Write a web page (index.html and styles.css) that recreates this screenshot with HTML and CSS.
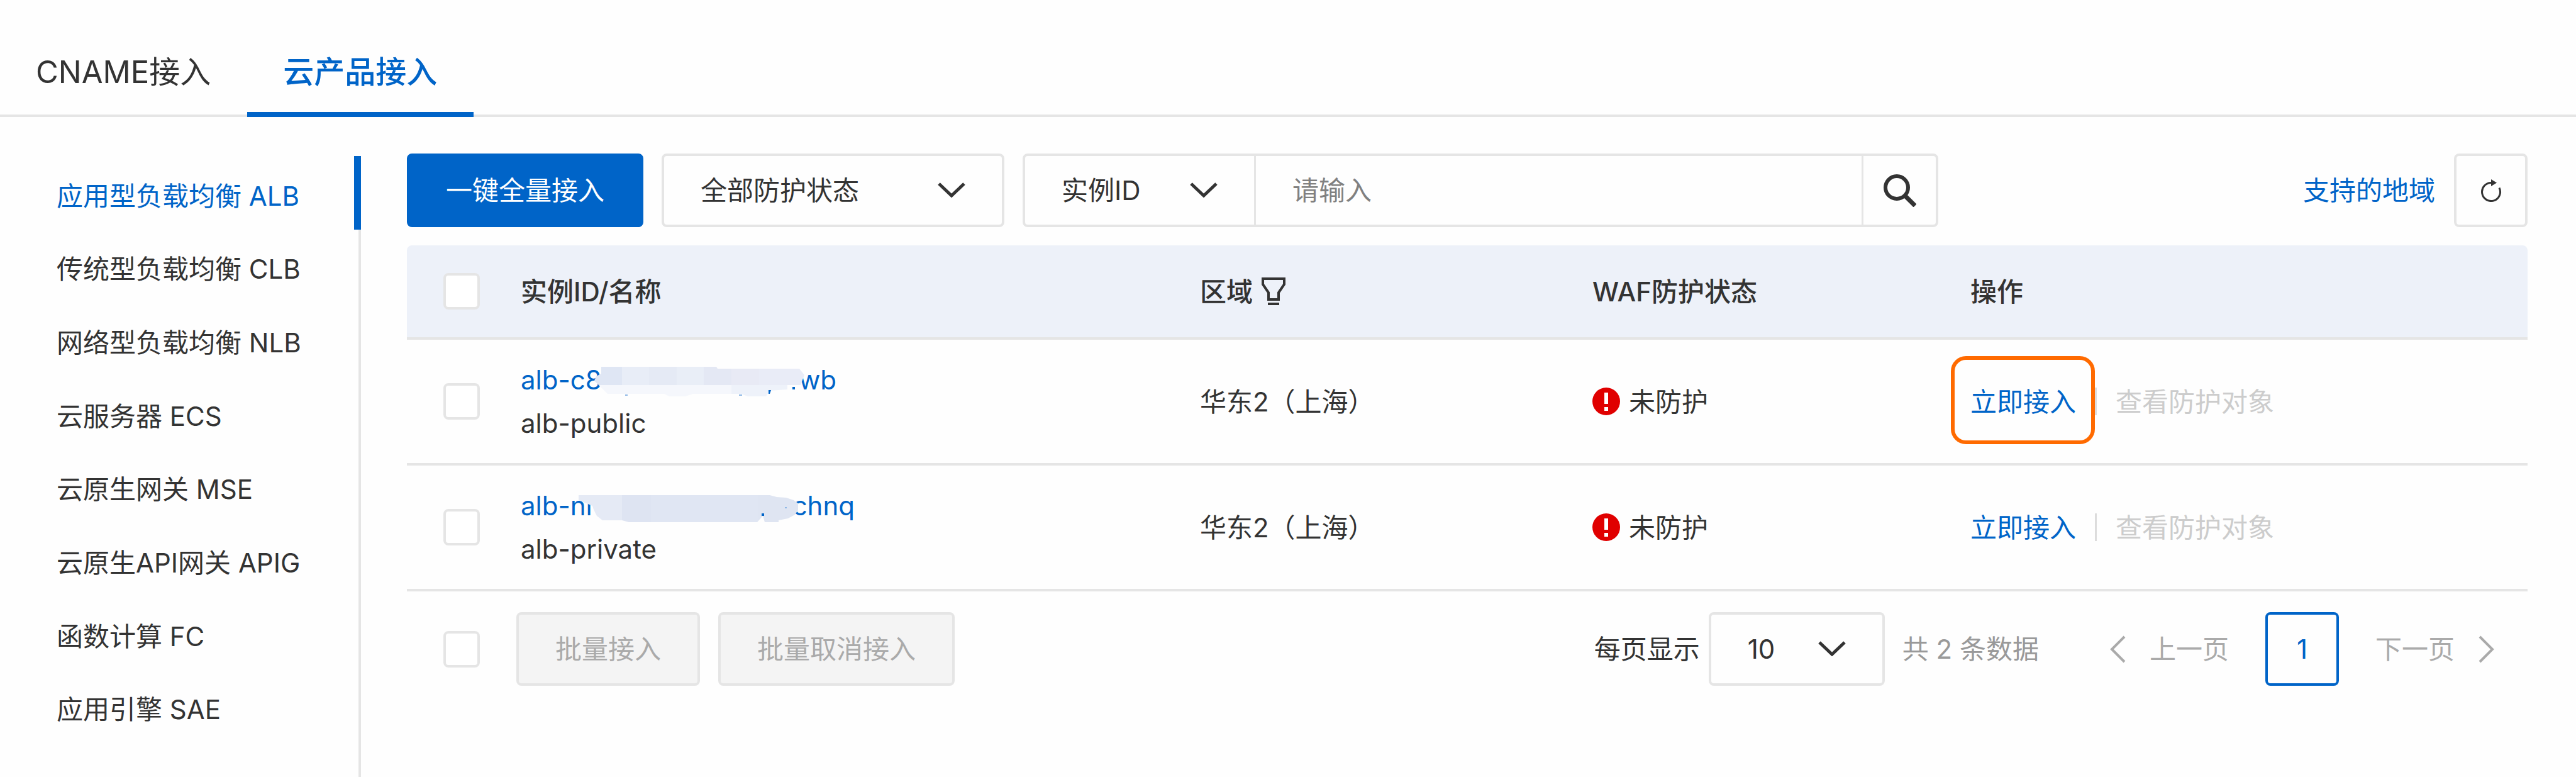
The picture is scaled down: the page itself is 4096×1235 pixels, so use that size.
FILE: index.html
```html
<!DOCTYPE html>
<html lang="zh-CN">
<head>
<meta charset="utf-8">
<title>云产品接入</title>
<link rel="stylesheet" href="styles.css">
</head>
<body>
<svg class="defs" aria-hidden="true">
  <symbol id="chevron" viewBox="0 0 44 24"><path d="M2 2 22 21 42 2" fill="none" stroke="currentColor" stroke-width="5"/></symbol>
  <symbol id="warn" viewBox="0 0 44 44"><circle cx="22" cy="22" r="22" fill="#e00000"/><path d="M19 8h6v18h-6zM19 31h6v6h-6z" fill="#fff"/></symbol>
</svg>
<nav class="tabs">
  <a class="tab" href="#cname">CNAME接入</a>
  <a class="tab tab-active" href="#cloud" aria-current="page">云产品接入</a>
</nav>
<div class="layout">
  <nav class="side">
    <ul class="side-list">
      <li><a class="side-link side-active" href="#alb">应用型负载均衡 ALB</a></li>
      <li><a class="side-link" href="#clb">传统型负载均衡 CLB</a></li>
      <li><a class="side-link" href="#nlb">网络型负载均衡 NLB</a></li>
      <li><a class="side-link" href="#ecs">云服务器 ECS</a></li>
      <li><a class="side-link" href="#mse">云原生网关 MSE</a></li>
      <li><a class="side-link" href="#apig">云原生API网关 APIG</a></li>
      <li><a class="side-link" href="#fc">函数计算 FC</a></li>
      <li><a class="side-link" href="#sae">应用引擎 SAE</a></li>
    </ul>
  </nav>
  <main class="main">
    <div class="toolbar">
      <button class="btn btn-primary" type="button">一键全量接入</button>
      <div class="select select-status">
        <select aria-label="防护状态"><option>全部防护状态</option></select>
        <svg class="chevron"><use href="#chevron"/></svg>
      </div>
      <form class="search">
        <div class="select select-field">
          <select aria-label="搜索字段"><option>实例ID</option></select>
          <svg class="chevron"><use href="#chevron"/></svg>
        </div>
        <input class="search-input" type="text" placeholder="请输入" aria-label="搜索">
        <button class="search-btn" type="button" aria-label="搜索">
          <svg width="52" height="52" viewBox="0 0 52 52"><circle cx="21" cy="21" r="18" fill="none" stroke="#333" stroke-width="6"/><path d="M34 34 50 50" stroke="#333" stroke-width="7"/></svg>
        </button>
      </form>
      <div class="tools">
        <a class="link" href="#regions">支持的地域</a>
        <button class="btn btn-icon" type="button" aria-label="刷新">
          <svg width="34" height="36" viewBox="0 0 34 36"><path d="M17 5.500A14.500 14.500 0 1 0 30 13.500" fill="none" stroke="#333" stroke-width="3"/><path d="M17 0 26 5.500 17 11z" fill="#333"/></svg>
        </button>
      </div>
    </div>

    <table class="table">
      <colgroup><col class="col-check"><col><col class="col-region"><col class="col-status"><col class="col-action"></colgroup>
      <thead>
        <tr>
          <th class="check-cell"><input class="check" type="checkbox" aria-label="全选"></th>
          <th>实例ID/名称</th>
          <th><div class="with-icon">区域<svg width="38" height="44" viewBox="0 0 38 44"><path d="M2 2H36V11L27 24V35H11V24L2 11z" fill="none" stroke="#333" stroke-width="4"/><path d="M10 42H28" stroke="#333" stroke-width="4"/></svg></div></th>
          <th>WAF防护状态</th>
          <th>操作</th>
        </tr>
      </thead>
      <tbody>
        <tr>
          <td class="check-cell"><input class="check" type="checkbox" aria-label="alb-public"></td>
          <td>
            <a class="link id id-public" href="#alb-public"><span>alb-c8</span><span>wb</span>
              <svg class="mask mask-public" width="340" height="52" viewBox="0 0 340 52">
                <clipPath id="brush-a"><path d="M12 3H195L197 6H327L335 16 329 32H308V39L280 41 274 50H245L234 46H158L146 50H120L112 46H22L12 36 1 25 4 18 12 14z"/></clipPath>
                <g clip-path="url(#brush-a)">
                  <path fill="#dfe6f4" d="M0 0h45v32H0z"/><path fill="#e8edf7" d="M45 0h43v32H45z"/><path fill="#e5eaf5" d="M88 0h44v32H88z"/><path fill="#e9eef7" d="M132 0h43v32h-43z"/><path fill="#e4e8f4" d="M175 0h44v32h-44z"/><path fill="#e8eaf5" d="M219 0h44v32h-44z"/><path fill="#e9ecf7" d="M263 0h77v32h-77z"/>
                  <path fill="#f5f7fc" d="M0 32h219v20H0z"/><path fill="#eef2fa" d="M219 32h121v20H219z"/>
                </g>
                <path fill="#0064c8" d="M278 40h4l-2 6h-2zM316 35h4v4h-4z"/><path fill="#8fb8e6" d="M50 47h4v2h-4zM231 47h5v2h-5z"/>
              </svg>
            </a>
            <div>alb-public</div>
          </td>
          <td>华东2（上海）</td>
          <td><div class="status"><svg width="44" height="44"><use href="#warn"/></svg>未防护</div></td>
          <td><div class="actions"><a class="link action-focus" href="#join">立即接入</a><span class="bar"></span><span class="muted">查看防护对象</span></div></td>
        </tr>
        <tr>
          <td class="check-cell"><input class="check" type="checkbox" aria-label="alb-private"></td>
          <td>
            <a class="link id id-private" href="#alb-private"><span>alb-ni</span><span>chnq</span>
              <svg class="mask mask-private" width="354" height="50" viewBox="0 0 354 50">
                <clipPath id="brush-b"><path d="M2 3H306L317 6 332 7 344 11 351 16V27L346 34 335 40 320 43V46H298L295 36 286 46H82L71 43H40L31 36 26 26 24 20 2 11z"/></clipPath>
                <g clip-path="url(#brush-b)">
                  <path fill="#e5eaf5" d="M0 0h71v50H0z"/><path fill="#dee4f2" d="M71 0h46v50H71z"/><path fill="#e0e6f3" d="M117 0h171v50H117z"/><path fill="#dfe5f2" d="M288 0h66v50h-66z"/>
                </g>
                <path fill="#0064c8" d="M293 32h4v4h-4z"/><path fill="#8fb8e6" d="M330 22h3v2h-3z"/>
              </svg>
            </a>
            <div>alb-private</div>
          </td>
          <td>华东2（上海）</td>
          <td><div class="status"><svg width="44" height="44"><use href="#warn"/></svg>未防护</div></td>
          <td><div class="actions"><a class="link" href="#join">立即接入</a><span class="bar"></span><span class="muted">查看防护对象</span></div></td>
        </tr>
      </tbody>
    </table>

    <div class="footer">
      <div class="batch">
        <input class="check" type="checkbox" aria-label="全选本页">
        <div class="batch-buttons">
          <button class="btn" type="button" disabled>批量接入</button>
          <button class="btn" type="button" disabled>批量取消接入</button>
        </div>
      </div>
      <div class="pager">
        <label for="size">每页显示</label>
        <div class="select select-size">
          <select id="size"><option>10</option></select>
          <svg class="chevron"><use href="#chevron"/></svg>
        </div>
        <span class="total">共 2 条数据</span>
        <button class="page-nav" type="button" disabled><svg width="26" height="44" viewBox="0 0 26 44"><path d="M24 2 4 22 24 42" fill="none" stroke="currentColor" stroke-width="4"/></svg>上一页</button>
        <button class="btn btn-icon page-current" type="button" aria-current="page">1</button>
        <button class="page-nav" type="button" disabled>下一页<svg width="26" height="44" viewBox="0 0 26 44"><path d="M2 2 22 22 2 42" fill="none" stroke="currentColor" stroke-width="4"/></svg></button>
      </div>
    </div>
  </main>
</div>
</body>
</html>
```
FILE: styles.css
```css
:root {
  --blue: #0064c8;
  --text: #333;
  --line: #e5e5e5;
  --control: 117px;
}

* { box-sizing: border-box; }

body {
  margin: 0;
  min-height: 100vh;
  display: flex;
  flex-direction: column;
  background: #fefefe;
  color: var(--text);
  font: 42px/69px Inter, "Noto Sans CJK SC", sans-serif;
}

button, input, select { font: inherit; color: inherit; }
a { text-decoration: none; }
svg { display: block; flex: none; }
.defs { position: absolute; width: 0; height: 0; }
.link { color: var(--blue); }

.tabs {
  display: flex;
  height: 186px;
  border-bottom: 4px solid var(--line);
}
.tab {
  height: 186px;
  padding: 42px 58px 0 57px;
  color: var(--text);
  font-size: 49px;
  line-height: 146px;
}
.tab-active {
  border-bottom: 8px solid var(--blue);
  color: var(--blue);
  font-weight: 500;
}

.layout { flex: 1; display: flex; }

.side {
  flex: none;
  width: 574px;
  margin-top: 62px;
  border-right: 4px solid var(--line);
}
.side-list {
  display: grid;
  grid-auto-rows: 1fr;
  height: 933px;
  margin: 0 -4px 0 0;
  padding: 0;
  list-style: none;
}
.side-link {
  display: flex;
  align-items: center;
  height: 100%;
  padding: 10px 0 0 90px;
  color: var(--text);
}
.side-active {
  border-right: 11px solid var(--blue);
  color: var(--blue);
}

.main {
  flex: 1;
  min-width: 0;
  padding: 58px 77px 0 73px;
}

.toolbar {
  display: flex;
  gap: 29px;
  margin-bottom: 29px;
}
.btn {
  height: var(--control);
  padding: 0 58px;
  border: 4px solid var(--line);
  border-radius: 8px;
  background: transparent;
  white-space: nowrap;
}
.btn:disabled { background: #f4f4f4; color: #aaa; }
.btn-primary {
  border-color: var(--blue);
  background: var(--blue);
  color: #fff;
}
.btn-icon {
  display: flex;
  align-items: center;
  justify-content: center;
  width: var(--control);
  padding: 0;
}

.select {
  position: relative;
  height: var(--control);
  border: 4px solid var(--line);
  border-radius: 8px;
}
.select select {
  appearance: none;
  width: 100%;
  height: 100%;
  padding: 0 58px;
  border: 0;
  background: transparent;
}
.chevron {
  position: absolute;
  top: 42px;
  right: 58px;
  width: 44px;
  height: 24px;
  pointer-events: none;
}
.select-status { width: 545px; }

.search {
  display: flex;
  width: 1456px;
  height: var(--control);
  border: 4px solid var(--line);
  border-radius: 8px;
}
.select-field {
  width: 367px;
  height: 100%;
  border-width: 0 3px 0 0;
  border-radius: 0;
}
.search-input {
  flex: 1;
  min-width: 0;
  padding: 0 58px;
  border: 0;
  background: transparent;
}
.search-input::placeholder { color: #808080; opacity: 1; }
.search-btn {
  display: flex;
  align-items: center;
  justify-content: center;
  width: 118px;
  padding: 0;
  border: 0;
  border-left: 3px solid var(--line);
  background: transparent;
}
.tools {
  display: flex;
  align-items: center;
  gap: 30px;
  margin-left: auto;
}

.table {
  width: 100%;
  table-layout: fixed;
  border-collapse: separate;
  border-spacing: 0;
}
.col-check { width: 153px; }
.col-region { width: 624px; }
.col-status { width: 601px; }
.col-action { width: 914px; }
th, td {
  height: 200px;
  padding: 0 28px;
  border-bottom: 4px solid var(--line);
  text-align: left;
}
th {
  height: 150px;
  background: #edf1f9;
  font-weight: 500;
}
th:first-child { border-top-left-radius: 8px; }
th:last-child { border-top-right-radius: 8px; }
.check-cell { padding: 0 0 0 58px; }
.check {
  appearance: none;
  display: block;
  width: 58px;
  height: 58px;
  margin: 0;
  border: 4px solid var(--line);
  border-radius: 8px;
  background: #fff;
}
.with-icon, .status, .actions { display: flex; align-items: center; }
.with-icon { gap: 14px; }
.status { gap: 14px; }

.id {
  position: relative;
  display: flex;
  justify-content: space-between;
}
.id-public { width: 502px; }
.id-private { width: 531px; }
.mask { position: absolute; }
.mask-public { left: 116px; top: 11px; }
.mask-private { left: 90px; top: 15px; }

.actions { gap: 30px; }
.action-focus { position: relative; }
.action-focus::after {
  content: "";
  position: absolute;
  inset: -38px -30px -33px -31px;
  border: 6px solid #ff6a00;
  border-radius: 24px;
}
.bar { width: 3px; height: 44px; background: #dcdcdc; }
.muted { color: #ccc; }

.footer {
  display: flex;
  justify-content: space-between;
  margin-top: 33px;
}
.batch { display: flex; align-items: center; gap: 58px; padding-left: 58px; }
.batch-buttons { display: flex; gap: 29px; }
.pager { display: flex; align-items: center; }
.select-size { width: 280px; margin: 0 28px 0 14px; }
.total { margin-right: 54px; color: #999; }
.page-nav {
  display: flex;
  align-items: center;
  gap: 38px;
  height: var(--control);
  padding: 0 58px;
  border: 0;
  background: transparent;
  color: #aaa;
}
.page-current { border-color: var(--blue); color: var(--blue); }
.page-nav:last-child { padding-right: 52px; }
```
